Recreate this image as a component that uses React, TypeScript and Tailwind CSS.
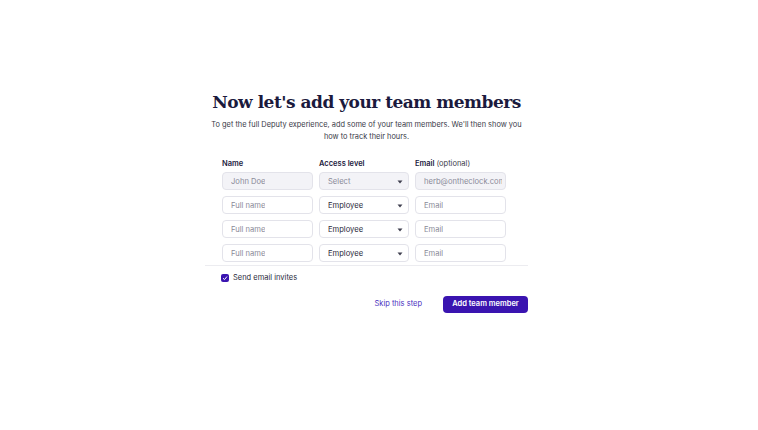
import React from "react";

const Caret = () => (
  <svg width="6" height="4" viewBox="0 0 6 4" className="absolute right-[5px] top-[7px]">
    <path d="M0.5 0.5 L5.5 0.5 L3 3.5 Z" fill="#3f3f4f" />
  </svg>
);

const TextBox = ({ placeholder, filled }: { placeholder: string; filled?: boolean }) => (
  <div
    className={`h-[18px] rounded-[4px] border border-[#e3e3ea] flex items-center pl-[8px] pr-[3px] text-[7.6px] text-[#8a8a98] ${
      filled ? "bg-[#f3f3f7]" : "bg-white"
    }`}
  >
    <span className="block overflow-hidden whitespace-nowrap">{placeholder}</span>
  </div>
);

const SelectBox = ({ value, filled }: { value: string; filled?: boolean }) => (
  <div
    className={`relative h-[18px] rounded-[4px] border border-[#e3e3ea] flex items-center pl-[8px] text-[7.6px] ${
      filled ? "bg-[#f3f3f7] text-[#8a8a98]" : "bg-white text-[#2a2a3a]"
    }`}
  >
    {value}
    <Caret />
  </div>
);

export default function App() {
  const rows = [0, 1, 2];
  return (
    <div
      className="w-[758px] h-[430px] bg-white pt-[91px] pl-[205px]"
      style={{ fontFamily: "Inter, 'Noto Sans', sans-serif" }}
    >
      <div className="w-[323px] flex flex-col">
        <h1
          className="text-center text-[17px] leading-[22px] font-bold text-[#1b1a3d] whitespace-nowrap tracking-[-0.5px]"
          style={{ fontFamily: "'DejaVu Serif', serif" }}
        >
          Now let's add your team members
        </h1>
        <p className="mt-[6px] text-center text-[7.4px] leading-[12px] text-[#3a3a48]">
          To get the full Deputy experience, add some of your team members. We'll then show you
          <br />
          how to track their hours.
        </p>
        <div className="mt-[15px] pl-[17px] pr-[21px]">
          <div className="grid grid-cols-[91px_90px_91px] gap-x-[6px] text-[7.5px] font-semibold text-[#1b1a3d] mb-[3px]">
            <div>Name</div>
            <div>Access level</div>
            <div>
              Email <span className="font-normal text-[#3a3a48]">(optional)</span>
            </div>
          </div>
          <div className="grid grid-cols-[91px_90px_91px] gap-x-[6px] gap-y-[6px]">
            <TextBox placeholder="John Doe" filled />
            <SelectBox value="Select" filled />
            <TextBox placeholder="herb@ontheclock.com" filled />
            {rows.map((r) => (
              <React.Fragment key={r}>
                <TextBox placeholder="Full name" />
                <SelectBox value="Employee" />
                <TextBox placeholder="Email" />
              </React.Fragment>
            ))}
          </div>
        </div>
        <div className="mt-[3px] h-px bg-[#ececf0]" />
        <div className="mt-[6px] pl-[16px] flex items-center gap-[4px]">
          <div className="w-[8px] h-[8px] rounded-[2px] bg-[#3a14b0] flex items-center justify-center">
            <svg width="6" height="6" viewBox="0 0 6 6">
              <path d="M1 3.2 L2.5 4.6 L5 1.5" stroke="white" strokeWidth="1" fill="none" />
            </svg>
          </div>
          <span className="text-[7.5px] text-[#2a2a3a]">Send email invites</span>
        </div>
        <div className="mt-[12px] flex items-center justify-end gap-[21px]">
          <span className="text-[7.5px] text-[#4a2fc0]">Skip this step</span>
          <button className="h-[17px] w-[85px] rounded-[4px] bg-[#3a14b0] text-white text-[7.5px] font-semibold">
            Add team member
          </button>
        </div>
      </div>
    </div>
  );
}
